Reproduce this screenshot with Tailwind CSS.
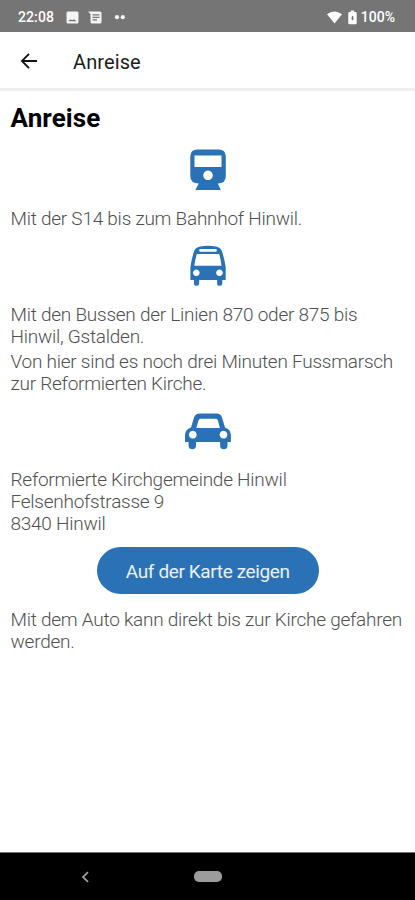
<!DOCTYPE html>
<html lang="de">
<head>
<meta charset="utf-8">
<meta name="viewport" content="width=device-width, initial-scale=1">
<title>Anreise</title>
<script src="https://cdn.jsdelivr.net/npm/@tailwindcss/browser@4"></script>
</head>
<body class="font-[Roboto,sans-serif] bg-white">
<div class="flex flex-col h-[900px] w-[415px] overflow-hidden">
  <div class="h-8 shrink-0 bg-[#757575] flex items-center text-white text-[14px] font-medium pl-[18px] pr-[20px] pt-[2px]">
    <span class="tracking-[0.1px]">22:08</span>
    <svg class="ml-[12px]" width="13" height="13" viewBox="0 0 13 13"><path fill="#f4f4f4" fill-rule="evenodd" d="M2 .5h9q1.500 0 1.500 1.500v9q0 1.500-1.500 1.500h-9Q.5 12.500.5 11V2Q.5.5 2 .5ZM2.300 10.300h8.400L8 8.200 6 9.300 4.600 8.200Z"/></svg>
    <svg class="ml-[9px]" width="14" height="13" viewBox="0 0 14 13"><path fill="#f4f4f4" fill-rule="evenodd" d="M0 .5h12q1.500 0 1.500 1.500v9q0 1.500-1.500 1.500H4Q2.500 12.500 2.500 11V3ZM4.500 3.200v1.200h7V3.200ZM4.500 5.700v1.200h7V5.700ZM4.500 8.200v1.200h4.500V8.200Z"/></svg>
    <svg class="ml-[12px]" width="12" height="5" viewBox="0 0 12 5"><circle cx="3" cy="2.200" r="2.100" fill="#f4f4f4"/><circle cx="8.800" cy="2.200" r="2.100" fill="#f4f4f4"/></svg>
    <svg class="ml-auto" width="15" height="13" viewBox="0 0 15 13"><path fill="#fff" d="M7.500 12.500 0 3.200Q7.500-2.200 15 3.200Z"/></svg>
    <svg class="ml-[6px]" width="9" height="15" viewBox="0 0 9 15"><path fill="#fff" fill-rule="evenodd" d="M2.800.5h3.400V2H7.500Q8.700 2 8.700 3.200V13q0 1.200-1.200 1.200h-6Q.3 14.200.3 13V3.200Q.3 2 1.500 2h1.300ZM3.800 6v2.200H2.900L4.500 10.500 6.100 8.200H5.200V6Z"/></svg>
    <span class="ml-[4px]">100%</span>
  </div>
  <header class="h-[59px] shrink-0 flex items-center border-b-[3px] border-[#efefef] pl-[20px] pt-[2px]">
    <svg width="18" height="18" viewBox="0 0 18 18" fill="none" stroke="#111" stroke-width="1.800"><path d="M17 9H2.200M9 1.800 1.900 9 9 16.200"/></svg>
    <span class="ml-[35px] text-[20px] tracking-[0.1px] text-[#1c1c1c] pt-px">Anreise</span>
  </header>
  <main class="flex-1 px-[10.500px] text-[19px] tracking-[-0.250px] leading-[22px] font-light text-[#505050]">
    <h1 class="text-[26px] leading-[32px] tracking-[0.1px] font-bold text-black mt-[11px] h-8">Anreise</h1>
    <svg class="mt-[10px] ml-[169.500px]" width="56" height="56" viewBox="180 144 56 56"><path fill="#2a72b5" fill-rule="evenodd" d="M197.500 149.500h21q7.300 0 7.300 7v19.500q0 7.500-8 7.500l3 6.500h-25.500l3.500-6.500q-8.500 0-8.500-7.500v-19.500q0-7 7.200-7ZM194.500 155.500V167h27v-11.500ZM208 170.500a4.800 4.800 0 1 0 .01 0Z"/></svg>
    <p class="mt-[8px]">Mit der S14 bis zum Bahnhof Hinwil.</p>
    <svg class="mt-[10px] ml-[169.500px]" width="56" height="56" viewBox="180 240 56 56"><path fill="#2a72b5" fill-rule="evenodd" d="M200 246.400Q208 245 216 246.400Q220.800 247.300 222 251.500Q224.500 259 225.700 267V280H222.300V283.500Q222.300 285.800 219.700 285.800T217.100 283.500V280H199.200V283.500Q199.200 285.800 196.600 285.800T194 283.500V280H190.400V267Q191.500 259 194 251.500Q195.200 247.300 200 246.400ZM200.200 249.100Q199.200 249.100 199.200 250.400T200.200 251.700H215.800Q216.800 251.700 216.800 250.400T215.800 249.100ZM196.800 253.900Q195.200 259.500 194.300 265.700H221.500Q220.800 259.500 219.200 253.900ZM196.300 269.500a3.300 3.300 0 1 0 .01 0ZM219.500 269.500a3.300 3.300 0 1 0 .01 0Z"/></svg>
    <p class="mt-[8px]">Mit den Bussen der Linien 870 oder 875 bis<br>Hinwil, Gstalden.</p>
    <p class="mt-[3px]">Von hier sind es noch drei Minuten Fussmarsch<br>zur Reformierten Kirche.</p>
    <svg class="mt-[10px] ml-[169.500px]" width="56" height="56" viewBox="180 405 56 56"><path fill="#2a72b5" fill-rule="evenodd" d="M200 413.500H216.500Q220.800 413.500 222 417.500L225 427.500Q230.900 429.500 230.900 435V442H227.500V445.500Q227.500 449.300 223.800 449.300T220.100 445.500V442H196V445.500Q196 449.300 192.300 449.300T188.600 445.500V442H185V435Q185 429.500 191 427.500L194 417.500Q195.300 413.500 200 413.500ZM200.500 418.700Q199 418.700 198.500 420.500L196.300 428H219.900L217.900 420.500Q217.400 418.700 216 418.700ZM192.800 430.800a3.900 3.900 0 1 0 .01 0ZM223.500 430.800a3.900 3.900 0 1 0 .01 0Z"/></svg>
    <p class="mt-[8px]">Reformierte Kirchgemeinde Hinwil<br>Felsenhofstrasse 9<br>8340 Hinwil</p>
    <button class="block mt-[12px] ml-[86px] w-[222.500px] h-[47px] rounded-full bg-[#2a72b5] text-white/90 font-normal text-[19px] tracking-[-0.380px] pt-[2px]">Auf der Karte zeigen</button>
    <p class="mt-[14.500px] whitespace-nowrap">Mit dem Auto kann direkt bis zur Kirche gefahren<br>werden.</p>
  </main>
  <nav class="h-[48px] shrink-0 bg-black border-t border-[#777] flex items-center">
    <svg class="ml-[81px]" width="9" height="12" viewBox="0 0 9 12" fill="none" stroke="#9c9c9c" stroke-width="1.800"><path d="M7 1.200 2 6l5 4.800"/></svg>
    <div class="ml-[104px] w-[28px] h-[11px] rounded-[5px] bg-[#9c9c9c]"></div>
  </nav>
</div>
</body>
</html>
